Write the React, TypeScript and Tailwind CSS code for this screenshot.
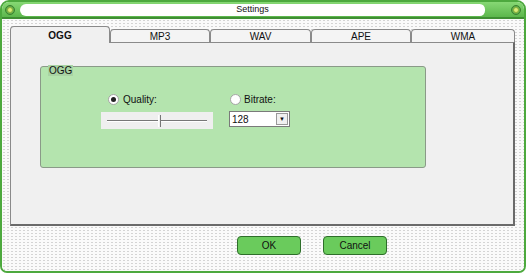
import React from "react";

const font = { fontFamily: '"Liberation Sans", Arial, sans-serif' };

function Knob() {
	return (
		<span className="flex h-[10px] w-[10px] items-center justify-center rounded-full border border-[#3d7f2f] bg-[#5fae4c]">
			<span className="h-[6px] w-[6px] rounded-full border border-[#8fae3a] bg-[#d6ec7c]" />
		</span>
	);
}

function Radio({ checked }: { checked?: boolean }) {
	return (
		<span className="flex h-[11px] w-[11px] items-center justify-center rounded-full border border-[#a5a5a5] bg-white">
			{checked && <span className="h-[5px] w-[5px] rounded-full bg-[#222]" />}
		</span>
	);
}

const tabs = ["OGG", "MP3", "WAV", "APE", "WMA"];
const widths = ["w-[100px]", "w-[100px]", "w-[101px]", "w-[100px]", "w-[104px]"];

export default function App() {
	return (
		<div className="h-[273px] w-[526px] overflow-hidden bg-white text-[10px] text-[#111]" style={font}>
			<div className="flex h-full flex-col overflow-hidden rounded-t-[9px] rounded-b-[7px] border-2 border-[#4da93e]">
				{/* title bar */}
				<div className="flex h-[17px] shrink-0 items-center gap-[5px] border-b-2 border-[#3f8f33] bg-gradient-to-b from-[#86d874] to-[#5cb74c] pl-[3px] pr-[3px]">
					<Knob />
					<div className="flex h-[12px] flex-1 items-center justify-center rounded-l-[7px] rounded-r-[6px] bg-white">
						<span className="text-[9px]">Settings</span>
					</div>
					<span className="w-[16px]" />
					<Knob />
				</div>

				{/* body */}
				<div className="flex flex-1 flex-col bg-[#fafafa] bg-[radial-gradient(#d4d4d4_0.8px,transparent_1px)] bg-[length:4px_3px] pl-[8px] pr-[9px] pt-[8px]">
					<div className="flex h-[16px] items-end">
						{tabs.map((t, i) => (
							<div
								key={t}
								className={`${widths[i]} flex items-center justify-center rounded-t-[4px] border border-b-0 border-[#8a8a8a] ${
									i === 0
										? "relative z-10 h-[17px] bg-[#f0f0f0] font-bold"
										: "h-[14px] bg-[#f4f4f4]"
								}`}
							>
								{t}
							</div>
						))}
					</div>
					<div className="-mt-px flex h-[184px] flex-col border border-[#8a8a8a] border-r-2 border-b-2 border-r-[#6a6a6a] border-b-[#6a6a6a] bg-[#f0f0f0] pl-[29px] pt-[23px]">
						<div className="relative h-[102px] w-[386px] rounded-[3px] border border-[#8a9a88] bg-[#b4e4ae]">
							<span className="absolute -top-[2px] left-[7px] bg-[#a9d3a3] px-[1px] leading-[11px]">OGG</span>
							<div className="flex pl-[60px] pt-[25px]">
								<div className="flex w-[128px] flex-col">
									<div className="ml-[7px] flex items-center gap-[4px]">
										<Radio checked />
										<span>Quality:</span>
									</div>
									<div className="relative mt-[5px] h-[17px] w-[112px] bg-[#efefef]">
										<span className="absolute left-[6px] right-[6px] top-[8px] h-[2px] border-t border-b border-[#777] border-b-white" />
										<span className="absolute left-[57px] top-[3px] h-[12px] w-[3px] border-l border-r border-[#777] border-l-white bg-[#efefef]" />
									</div>
								</div>
								<div className="flex flex-col">
									<div className="ml-[1px] flex items-center gap-[3px]">
										<Radio />
										<span>Bitrate:</span>
									</div>
									<div className="mt-[4px] flex h-[16px] w-[61px] items-center justify-between border border-[#7a7a7a] bg-white pl-[2px] pr-[1px]">
										<span>128</span>
										<span className="flex h-[12px] w-[12px] items-center justify-center border border-[#999] bg-[#f0f0f0] text-[6px]">▼</span>
									</div>
								</div>
							</div>
						</div>
					</div>
					<div className="flex gap-[22px] pl-[227px] pt-[10px]">
						<button className="h-[19px] w-[64px] rounded-[4px] border border-[#2e6e2a] bg-[#6acb5c] text-[10px]" style={font}>
							OK
						</button>
						<button className="h-[19px] w-[64px] rounded-[4px] border border-[#2e6e2a] bg-[#6acb5c] text-[10px]" style={font}>
							Cancel
						</button>
					</div>
				</div>
			</div>
		</div>
	);
}
